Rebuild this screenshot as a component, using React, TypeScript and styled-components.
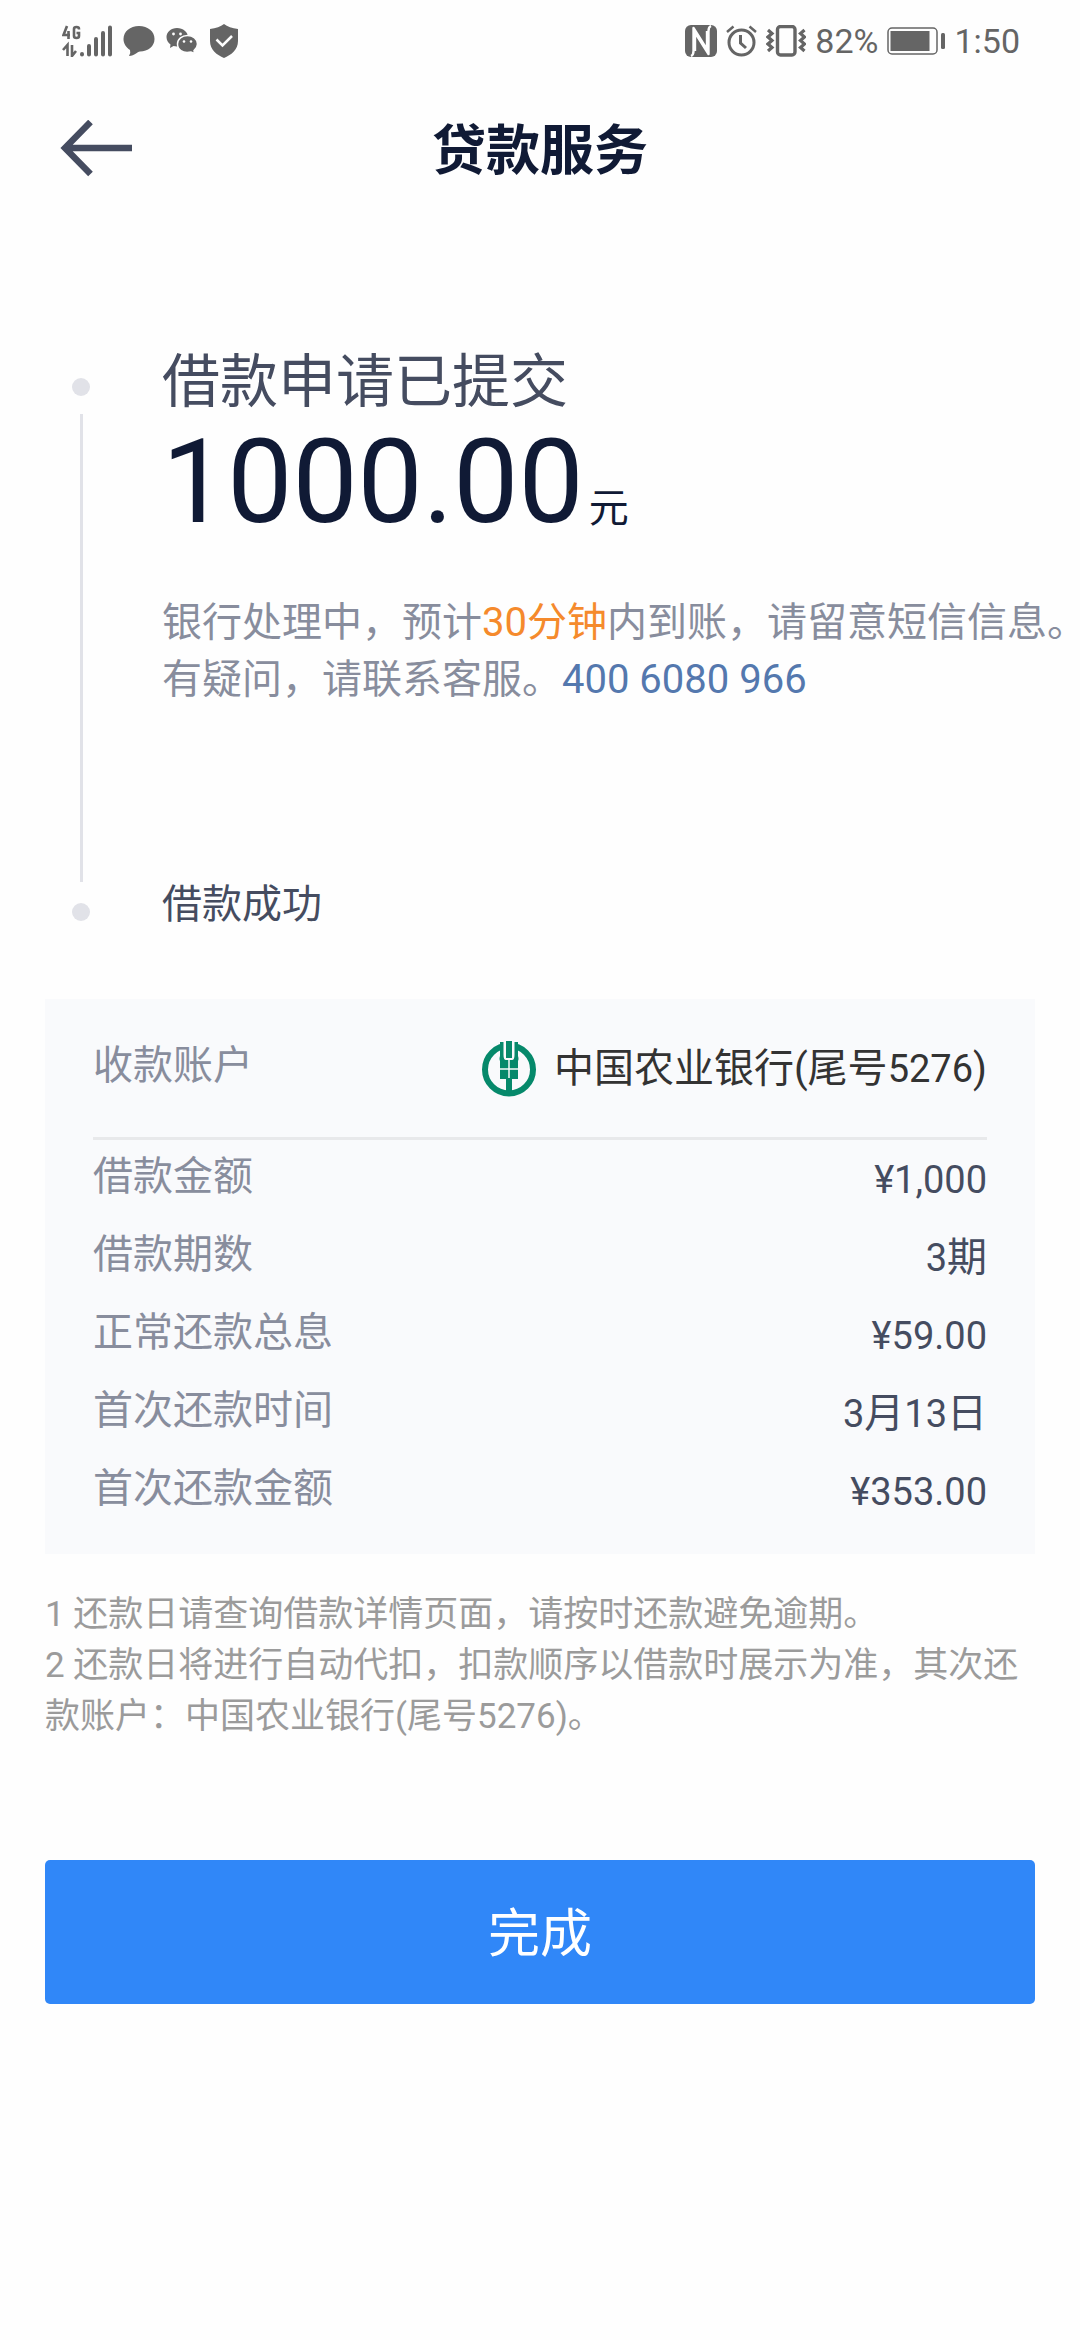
import React from "react";
import styled, { createGlobalStyle } from "styled-components";

const colors = {
  ink: "#101a35",
  body: "#454c60",
  muted: "#888d9d",
  note: "#9b9b9b",
  status: "#656565",
  accent: "#f58a2c",
  link: "#5478ae",
  primary: "#3087f8",
  panel: "#f9fafc",
  rail: "#e1e2e8",
  green: "#06896b",
};

const GlobalStyle = createGlobalStyle`
  *, *::before, *::after { box-sizing: border-box; }
  body {
    margin: 0;
    background: #fefefe;
    font-family: Roboto, "Noto Sans CJK SC", sans-serif;
    font-size: 40px;
    color: ${colors.body};
  }
  h1, h2, p, dl, dd { margin: 0; font-weight: 400; }
`;

const Page = styled.div`
  min-height: 100vh;
  overflow-x: hidden;
`;

const StatusBar = styled.div`
  display: flex;
  justify-content: space-between;
  align-items: center;
  height: 81px;
  padding: 0 60px 0 62px;
  color: ${colors.status};
  font-size: 34px;
  line-height: 40px;
  svg { display: block; }
`;

const StatusGroup = styled.div<{ $gap: number }>`
  display: flex;
  align-items: center;
  gap: ${(p) => p.$gap}px;
`;

const Header = styled.header`
  display: grid;
  grid-template-columns: 1fr auto 1fr;
  align-items: center;
  height: 138px;
  padding: 0 60px;
`;

const BackButton = styled.button`
  justify-self: start;
  padding: 0;
  border: 0;
  background: none;
  color: ${colors.body};
  svg { display: block; }
`;

const Title = styled.h1`
  padding-top: 4px;
  font-size: 54px;
  line-height: 78px;
  color: ${colors.ink};
  && { font-weight: 700; }
`;

const Timeline = styled.section`
  display: flex;
  gap: 72px;
  padding: 121px 0 0 72px;
`;

const Rail = styled.div`
  display: flex;
  flex-direction: column;
  align-items: center;
  padding: 38px 0 12px;
`;

const Dot = styled.span`
  width: 18px;
  height: 18px;
  border-radius: 50%;
  background: ${colors.rail};
`;

const RailLine = styled.span`
  flex: 1;
  width: 3px;
  margin: 18px 0 21px;
  background: ${colors.rail};
`;

const Steps = styled.div`
  flex: 1;
  white-space: nowrap;
`;

const StepTitle = styled.h2`
  font-size: 58px;
  line-height: 84px;
`;

const Amount = styled.p`
  display: flex;
  align-items: baseline;
  gap: 5px;
  font-size: 116px;
  line-height: 116px;
  color: ${colors.ink};
`;

const Unit = styled.span`
  font-size: 40px;
  line-height: 40px;
`;

const Message = styled.p`
  margin-top: 54px;
  line-height: 57px;
  color: ${colors.muted};
`;

const Highlight = styled.strong`
  font-weight: 400;
  color: ${colors.accent};
`;

const PhoneLink = styled.a`
  color: ${colors.link};
  text-decoration: none;
`;

const NextStep = styled.p`
  margin-top: 168px;
  line-height: 57px;
`;

const Card = styled.dl`
  && { margin: 66px 45px 0; }
  padding: 0 48px 23px;
  background: ${colors.panel};
`;

const Row = styled.div`
  display: flex;
  justify-content: space-between;
  align-items: flex-start;
`;

const AccountRow = styled(Row)`
  margin-bottom: 1px;
  padding: 31px 0 29px;
  border-bottom: 3px solid #e8e9eb;
`;

const Label = styled.dt`
  line-height: 72px;
  color: ${colors.muted};
`;

const Value = styled.dd<{ $dark?: boolean }>`
  display: flex;
  align-items: center;
  gap: 18px;
  line-height: 78px;
  color: ${(p) => (p.$dark ? "#333333" : colors.body)};
`;

const Digits = styled.span`
  font-size: 38px;
`;

const Notes = styled.section`
  margin: 35px 45px 0;
  font-size: 35px;
  line-height: 51px;
  color: ${colors.note};
`;

const Actions = styled.div`
  display: flex;
  padding: 118px 45px 60px;
`;

const PrimaryButton = styled.button`
  flex: 1;
  height: 144px;
  padding: 6px 0 0;
  border: 0;
  border-radius: 5px;
  background: ${colors.primary};
  color: #ffffff;
  font-family: inherit;
  font-size: 52px;
  line-height: 78px;
`;

const SignalIcon = () => (
  <svg width="50" height="32" viewBox="0 0 50 32" fill="none" stroke="currentColor" aria-label="4G">
    <path d="M5 1L1.500 10H8M6.500 6V14" strokeWidth="2.600" />
    <path d="M17 4.500V4Q17 2 14.500 2T12 4V11Q12 13 14.500 13T17 11V8H14.500" strokeWidth="2.600" />
    <path d="M1 25L5.500 20V31M10 20V31L14 26" strokeWidth="2.600" />
    <path d="M20 29V29.500M27 21V29.500M34 14V29.500M41 8V29.500M48 2.500V29.500" strokeWidth="4" strokeLinecap="round" />
  </svg>
);

const ChatIcon = () => (
  <svg width="32" height="32" viewBox="0 0 32 32" fill="currentColor">
    <path d="M16 1C25 1 31.500 6.500 31.500 14S25 26.500 17 26.500C14 27 12 30.500 6 31Q8 28 7 25C3 22.500.5 18.500.5 14 .5 6.500 7 1 16 1Z" />
  </svg>
);

const WeChatIcon = () => (
  <svg width="32" height="28" viewBox="0 0 32 28">
    <path fill="currentColor" d="M11 1C17 1 22 5 22 10S17 19.500 11 19.500L7.500 19 4 21 4.500 17.500C2 16 .5 13 .5 10 .5 5 5 1 11 1Z" />
    <path fill="currentColor" stroke="#fefefe" strokeWidth="1.500" d="M21.500 8.500C27 8.500 31.500 12 31.500 17 31.500 19.500 30 21.800 28 23.500L28.500 26.500 25 25C16 27 11.500 22 11.500 17S16 8.500 21.500 8.500Z" />
    <g fill="#fefefe"><circle cx="7.500" cy="7" r="1.400" /><circle cx="14.500" cy="7" r="1.400" /><circle cx="18" cy="14.500" r="1.300" /><circle cx="25" cy="14.500" r="1.300" /></g>
  </svg>
);

const ShieldIcon = () => (
  <svg width="30" height="34" viewBox="0 0 30 34">
    <path fill="currentColor" d="M15 0Q20 4 29 5V17C29 26 22 31 15 34 8 31 1 26 1 17V5Q10 4 15 0Z" />
    <path fill="none" stroke="#fefefe" strokeWidth="2.500" d="M7.500 15.500L13.500 21.500 23 12" />
  </svg>
);

const NfcIcon = () => (
  <svg width="32" height="32" viewBox="0 0 32 32">
    <rect width="32" height="32" rx="6" fill="currentColor" />
    <path fill="none" stroke="#fefefe" strokeWidth="2.400" strokeLinejoin="round" d="M6 31Q8.500 30 8.500 26V3L22 24.500V6M26 1Q23.500 2 23.500 6V29L10 7.500V26" />
  </svg>
);

const AlarmIcon = () => (
  <svg width="31" height="32" viewBox="0 0 31 32" fill="none" stroke="currentColor">
    <circle cx="15.500" cy="17.500" r="12.500" strokeWidth="3" />
    <path d="M14.500 10V18L20 23" strokeWidth="3" />
    <path d="M1 7L7.500 1.500M30 7L23.500 1.500" strokeWidth="2.500" />
  </svg>
);

const VibrateIcon = () => (
  <svg width="40" height="32" viewBox="0 0 40 32" fill="none" stroke="currentColor">
    <rect x="11.500" y="1.500" width="17.500" height="28.500" rx="3" strokeWidth="3.400" />
    <path d="M2 5L6 8.500 2 12 6 15.500 2 19 6 22.500 2 26M38.500 5L34.500 8.500 38.500 12 34.500 15.500 38.500 19 34.500 22.500 38.500 26" strokeWidth="3.200" />
  </svg>
);

const BatteryIcon = () => (
  <svg width="58" height="28" viewBox="0 0 58 28">
    <rect x="1" y="1" width="49" height="26" rx="4" fill="none" stroke="currentColor" strokeWidth="1.500" />
    <rect x="3.500" y="4" width="39" height="20" fill="currentColor" />
    <rect x="54" y="6" width="4" height="16" rx="1.500" fill="currentColor" />
  </svg>
);

const BackArrow = () => (
  <svg width="72" height="61" viewBox="0 0 72 61" fill="none" stroke="currentColor" strokeWidth="6.500">
    <path d="M72 28H6M30.500 2L5 28L30.500 54" />
  </svg>
);

const BankLogo = () => (
  <svg width="54" height="57" viewBox="0 0 54 57">
    <circle cx="27" cy="28.500" r="24" fill="none" stroke={colors.green} strokeWidth="6" />
    <path fill={colors.panel} d="M20 0H34V20H20Z" />
    <path fill={colors.green} d="M18 1H21.500V14Q21.500 19 24 19H30Q32.500 19 32.500 14V1H36V15Q37 18 36 20V38H30V54H24V38H18V20Q17 18 18 15ZM24 0H30V17H24Z" />
    <path fill="none" stroke={colors.panel} strokeWidth="1.500" d="M27 18V37M18 28H36" />
  </svg>
);

const details = [
  { label: "借款金额", digits: "¥1,000" },
  { label: "借款期数", digits: "3", suffix: "期" },
  { label: "正常还款总息", digits: "¥59.00" },
  { label: "首次还款时间", date: ["3", "13"] },
  { label: "首次还款金额", digits: "¥353.00" },
];

export default function App() {
  return (
    <Page>
      <GlobalStyle />
      <StatusBar>
        <StatusGroup $gap={11}>
          <SignalIcon />
          <ChatIcon />
          <WeChatIcon />
          <ShieldIcon />
        </StatusGroup>
        <StatusGroup $gap={9}>
          <NfcIcon />
          <AlarmIcon />
          <VibrateIcon />
          <span>82%</span>
          <BatteryIcon />
          <span>1:50</span>
        </StatusGroup>
      </StatusBar>

      <Header>
        <BackButton type="button" aria-label="返回">
          <BackArrow />
        </BackButton>
        <Title>贷款服务</Title>
      </Header>

      <main>
        <Timeline>
          <Rail>
            <Dot />
            <RailLine />
            <Dot />
          </Rail>
          <Steps>
            <StepTitle>借款申请已提交</StepTitle>
            <Amount>
              1000.00<Unit>元</Unit>
            </Amount>
            <Message>
              银行处理中，预计<Highlight>30分钟</Highlight>内到账，请留意短信信息。
              <br />
              有疑问，请联系客服。<PhoneLink href="tel:4006080966">400 6080 966</PhoneLink>
            </Message>
            <NextStep>借款成功</NextStep>
          </Steps>
        </Timeline>

        <Card>
          <AccountRow>
            <Label>收款账户</Label>
            <Value $dark>
              <BankLogo />
              <span>
                中国农业银行(尾号<Digits>5276</Digits>)
              </span>
            </Value>
          </AccountRow>
          {details.map(({ label, digits, suffix, date }) => (
            <Row key={label}>
              <Label>{label}</Label>
              <Value>
                {date ? (
                  <span>
                    <Digits>{date[0]}</Digits>月<Digits>{date[1]}</Digits>日
                  </span>
                ) : (
                  <span>
                    <Digits>{digits}</Digits>
                    {suffix}
                  </span>
                )}
              </Value>
            </Row>
          ))}
        </Card>

        <Notes>
          <p>1 还款日请查询借款详情页面，请按时还款避免逾期。</p>
          <p>2 还款日将进行自动代扣，扣款顺序以借款时展示为准，其次还款账户：中国农业银行(尾号5276)。</p>
        </Notes>

        <Actions>
          <PrimaryButton type="button">完成</PrimaryButton>
        </Actions>
      </main>
    </Page>
  );
}
